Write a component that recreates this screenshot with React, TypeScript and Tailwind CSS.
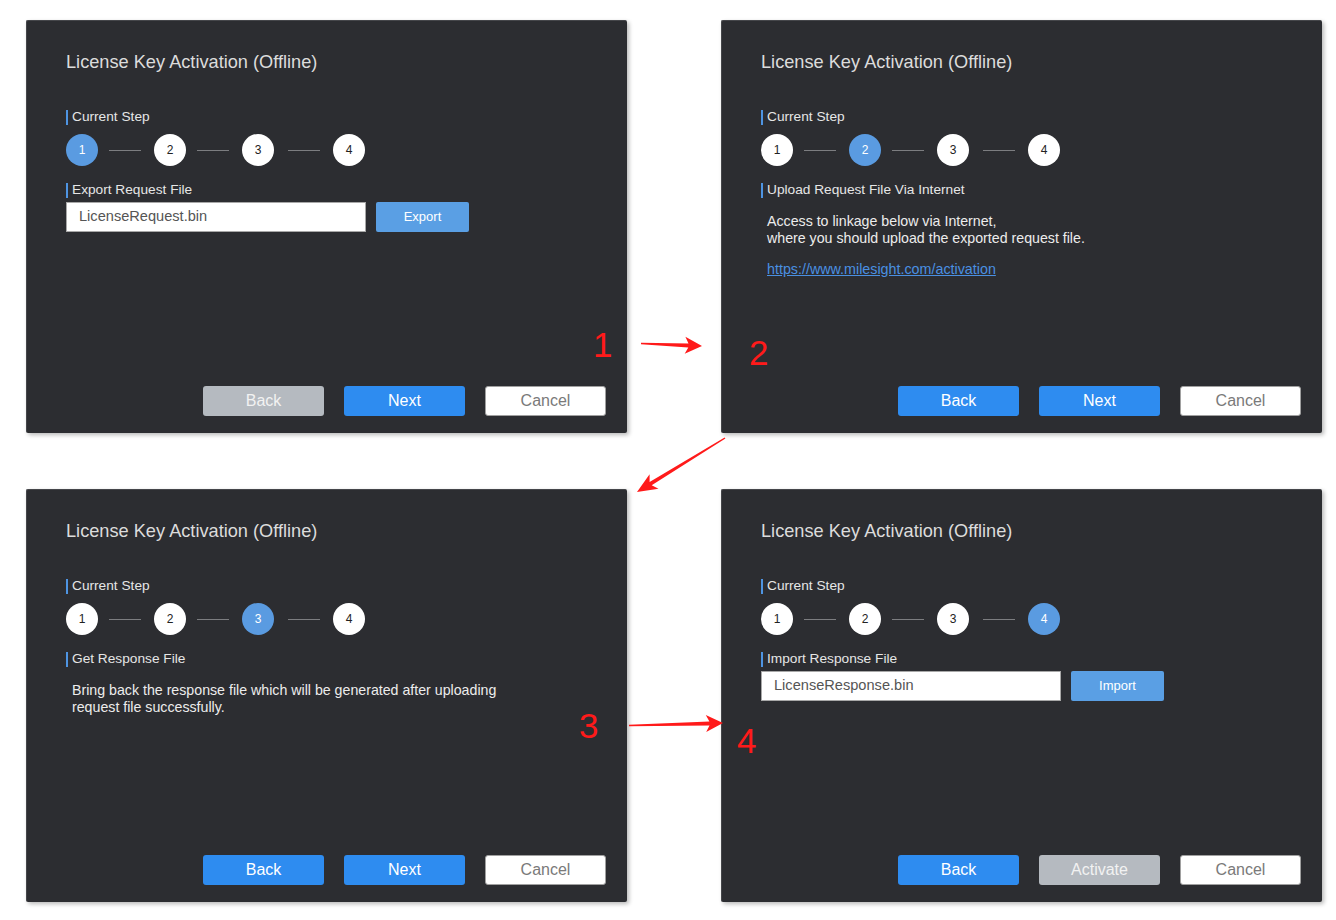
import React from "react";

type BtnKind = "primary" | "disabled" | "cancel";

function Btn({ label, kind }: { label: string; kind: BtnKind }) {
  const cls =
    kind === "primary"
      ? "bg-[#2e8cf0] text-white"
      : kind === "disabled"
      ? "bg-[#b5bac0] text-[#f2f2f2]"
      : "bg-white text-[#7a7a7a] border border-[#a0a0a0]";
  return (
    <div className={`w-[121px] h-[30px] rounded-[3px] flex items-center justify-center text-[16px] ${cls}`}>
      {label}
    </div>
  );
}

function Label({ text }: { text: string }) {
  return (
    <div className="h-[20px] flex items-center">
      <div className="w-[2px] h-[15px] bg-[#4e94e2]" />
      <div className="ml-[4px] text-[13.7px] text-[#e6e6e6] leading-[20px]">{text}</div>
    </div>
  );
}

function Steps({ active }: { active: number }) {
  const items = [1, 2, 3, 4];
  return (
    <div className="flex items-center h-[32px]">
      {items.map((n, i) => (
        <React.Fragment key={n}>
          <div
            className={`w-[32px] h-[32px] rounded-full flex items-center justify-center text-[12px] ${
              n === active ? "bg-[#5a9be1] text-white" : "bg-white text-[#222]"
            }`}
          >
            {n}
          </div>
          {i < 3 && (
            <div
              className={`h-px bg-[#7c7d80] ${
                i === 2 ? "ml-[14px] mr-[13px] w-[32px]" : "ml-[11px] mr-[13px] w-[32px]"
              }`}
            />
          )}
        </React.Fragment>
      ))}
    </div>
  );
}

function FileRow({ value, action }: { value: string; action: string }) {
  return (
    <div className="flex items-center h-[30px]">
      <div className="w-[300px] h-[30px] bg-white border border-[#a8a8a8] flex items-center pl-[12px] text-[14.6px] text-[#555]">
        {value}
      </div>
      <div className="ml-[10px] w-[93px] h-[30px] rounded-[2px] bg-[#5a9fe4] text-white text-[13px] flex items-center justify-center">
        {action}
      </div>
    </div>
  );
}

function Panel({
  active,
  section,
  children,
  buttons,
}: {
  active: number;
  section: string;
  children: React.ReactNode;
  buttons: [string, BtnKind][];
}) {
  return (
    <div className="w-[601px] h-[413px] bg-[#2c2d31] rounded-[2px] shadow-[2px_2px_4px_rgba(0,0,0,0.28)] border-t border-l border-[#45464a] flex flex-col pl-[39px] pr-[21px] pt-[29px] pb-[17px]">
      <div className="h-[24px] leading-[24px] text-[18.2px] text-[#dcdcdc]">License Key Activation (Offline)</div>
      <div className="mt-[33px]">
        <Label text="Current Step" />
      </div>
      <div className="mt-[7px]">
        <Steps active={active} />
      </div>
      <div className="mt-[14px]">
        <Label text={section} />
      </div>
      {children}
      <div className="mt-auto flex justify-end gap-[20px]">
        {buttons.map(([l, k]) => (
          <Btn key={l} label={l} kind={k} />
        ))}
      </div>
    </div>
  );
}

function arrowPoints(
  tx: number,
  ty: number,
  hx: number,
  hy: number,
  headLen: number,
  headW: number,
  tailW: number,
  neckW: number
) {
  const dx = hx - tx;
  const dy = hy - ty;
  const L = Math.sqrt(dx * dx + dy * dy);
  const ux = dx / L;
  const uy = dy / L;
  const px = -uy;
  const py = ux;
  const bx = hx - ux * headLen;
  const by = hy - uy * headLen;
  const nx = hx - ux * (headLen * 0.8);
  const ny = hy - uy * (headLen * 0.8);
  const pts: [number, number][] = [
    [tx + px * tailW / 2, ty + py * tailW / 2],
    [nx + px * neckW / 2, ny + py * neckW / 2],
    [bx + px * headW / 2, by + py * headW / 2],
    [hx, hy],
    [bx - px * headW / 2, by - py * headW / 2],
    [nx - px * neckW / 2, ny - py * neckW / 2],
    [tx - px * tailW / 2, ty - py * tailW / 2],
  ];
  return pts.map((p) => `${p[0].toFixed(1)},${p[1].toFixed(1)}`).join(" ");
}

export default function App() {
  return (
    <div
      className="relative w-[1336px] h-[920px] bg-white overflow-hidden"
      style={{ fontFamily: '"Liberation Sans", Arial, sans-serif' }}
    >
      <div className="grid grid-cols-[601px_601px] gap-x-[94px] gap-y-[56px] pl-[26px] pt-[20px]">
        <Panel
          active={1}
          section="Export Request File"
          buttons={[
            ["Back", "disabled"],
            ["Next", "primary"],
            ["Cancel", "cancel"],
          ]}
        >
          <div className="mt-[2px]">
            <FileRow value="LicenseRequest.bin" action="Export" />
          </div>
        </Panel>
        <Panel
          active={2}
          section="Upload Request File Via Internet"
          buttons={[
            ["Back", "primary"],
            ["Next", "primary"],
            ["Cancel", "cancel"],
          ]}
        >
          <div className="mt-[13px] pl-[6px] text-[14.2px] leading-[17px] text-[#ececec]">
            <div>Access to linkage below via Internet,</div>
            <div>where you should upload the exported request file.</div>
            <div className="mt-[14px] text-[#4a90e2] underline text-[14.3px]">https://www.milesight.com/activation</div>
          </div>
        </Panel>
        <Panel
          active={3}
          section="Get Response File"
          buttons={[
            ["Back", "primary"],
            ["Next", "primary"],
            ["Cancel", "cancel"],
          ]}
        >
          <div className="mt-[13px] pl-[6px] text-[14.2px] leading-[17px] text-[#ececec]">
            <div>Bring back the response file which will be generated after uploading</div>
            <div>request file successfully.</div>
          </div>
        </Panel>
        <Panel
          active={4}
          section="Import Response File"
          buttons={[
            ["Back", "primary"],
            ["Activate", "disabled"],
            ["Cancel", "cancel"],
          ]}
        >
          <div className="mt-[2px]">
            <FileRow value="LicenseResponse.bin" action="Import" />
          </div>
        </Panel>
      </div>

      <svg className="absolute left-0 top-0 pointer-events-none" width="1336" height="920">
        <polygon points={arrowPoints(641, 343.5, 702, 346, 17, 17, 1.5, 4)} fill="#ff1a1a" />
        <polygon points={arrowPoints(725, 438, 637, 492, 20, 17, 1.5, 4)} fill="#ff1a1a" />
        <polygon points={arrowPoints(629, 725.5, 723, 723, 17, 17, 1.5, 4)} fill="#ff1a1a" />
      </svg>

      <div className="absolute left-[593px] top-[325px] text-[35px] leading-[40px] text-[#ff1a1a]">1</div>
      <div className="absolute left-[749px] top-[333px] text-[35px] leading-[40px] text-[#ff1a1a]">2</div>
      <div className="absolute left-[579px] top-[706px] text-[35px] leading-[40px] text-[#ff1a1a]">3</div>
      <div className="absolute left-[737px] top-[721px] text-[35px] leading-[40px] text-[#ff1a1a]">4</div>
    </div>
  );
}
